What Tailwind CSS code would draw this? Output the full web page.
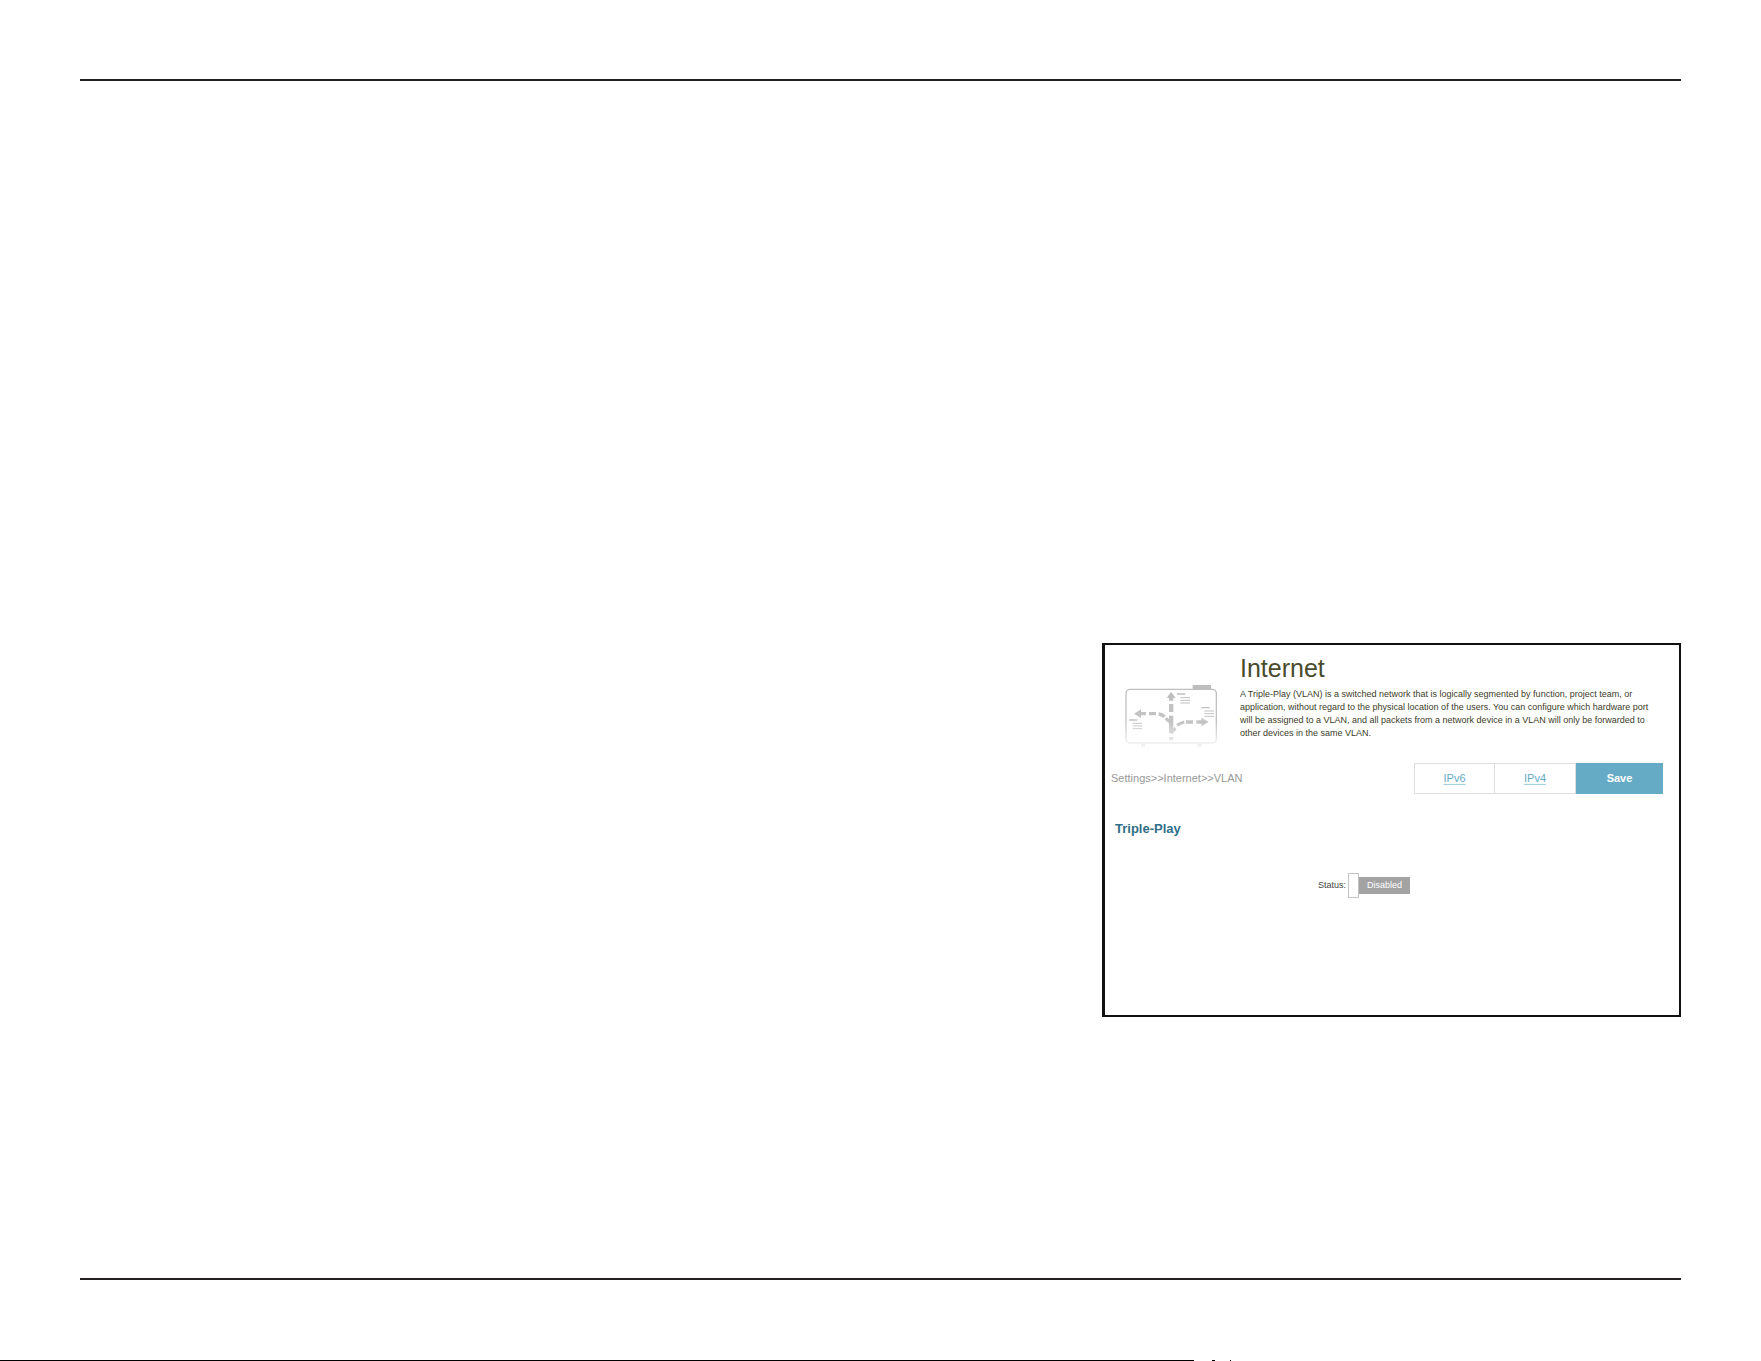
<!DOCTYPE html>
<html lang="en">
  <head>
    <meta charset="UTF-8" />
    <meta name="viewport" content="width=device-width, initial-scale=1.0" />
    <script src="https://cdn.jsdelivr.net/npm/@tailwindcss/browser@4"></script>
    <title>Internet - VLAN</title>
  </head>
  <body class="flex min-h-screen flex-col bg-white font-['Liberation_Sans',Arial,sans-serif]">
    <div class="mx-20 mt-[79px] flex grow flex-col items-end border-y-2 border-[#231f20] pt-[562px] pb-[261px]">
      <main class="w-full max-w-[579px] grow border-2 border-l-3 border-[#111] pr-4">
        <!-- title -->
        <header class="flex">
          <svg class="mt-[30px] ml-[10px] shrink-0" width="110" height="80" viewBox="0 0 330 240" fill="none" aria-hidden="true">
            <defs>
              <linearGradient id="fade" gradientUnits="userSpaceOnUse" x1="0" y1="30" x2="0" y2="218">
                <stop offset="0" stop-color="#bdbdbd" />
                <stop offset="0.6" stop-color="#c4c4c4" />
                <stop offset="1" stop-color="#f6f6f6" />
              </linearGradient>
            </defs>
            <rect x="33" y="43" width="271" height="161" rx="12" stroke="url(#fade)" stroke-width="4" />
            <path fill="url(#fade)" d="M233 30h55v12h-55zM78 206h12v11H78zM247 206h12v11h-12z" />
            <!-- arrows -->
            <path
              fill="url(#fade)"
              d="M168 50l14 19h-7v8h-13v-8h-7zM162 87h13v24h-13zM162 122h13v52h-13zM162 186h13v10h-13zM57 116l21-13v8h15v10H78v8zM102 111h21v10h-21zM281 141l-22-13v8h-15v10h15v8zM213 136h21v10h-21z"
            />
            <path stroke="url(#fade)" stroke-width="10" d="M131 117q10 1 18 8M152 130l14 12M186 151q10-7 22-10M168 176q4-10 14-16" />
            <!-- labels -->
            <path stroke="url(#fade)" stroke-width="4" d="M186 57h25M259 98h25M42 135h25" />
            <path
              stroke="url(#fade)"
              stroke-width="3"
              d="M196 68h29M196 76h29M196 84h29M268 108h29M268 116h29M268 124h29M53 145h28M53 153h28M53 161h28"
            />
          </svg>
          <div class="ml-[15px] max-w-[415px] pt-[9px] text-[#3c3c28]">
            <h1 class="text-[25px] leading-[28px] text-[#484b2c]">Internet</h1>
            <p class="mt-[6px] text-[9px] leading-[13px]">
              A Triple-Play (VLAN) is a switched network that is logically segmented by function, project team, or
              application, without regard to the physical location of the users. You can configure which hardware port
              will be assigned to a VLAN, and all packets from a network device in a VLAN will only be forwarded to
              other devices in the same VLAN.
            </p>
          </div>
        </header>

        <!-- breadcrumb + actions -->
        <div class="mt-2 flex h-[31px] items-center justify-between pl-1.5">
          <span class="text-[11px] text-[#999]">Settings&gt;&gt;Internet&gt;&gt;VLAN</span>
          <nav class="flex h-full text-[11px]">
            <a href="#" class="flex w-[81px] items-center justify-center border border-[#ddd] text-[#66abc6] underline decoration-[#a5d0e0] underline-offset-2">IPv6</a>
            <a href="#" class="flex w-[81px] items-center justify-center border-y border-r border-[#ddd] text-[#66abc6] underline decoration-[#a5d0e0] underline-offset-2">IPv4</a>
            <button type="button" class="w-[87px] bg-[#66abc6] font-bold text-white">Save</button>
          </nav>
        </div>

        <h2 class="mt-[27px] pl-[10px] text-[13px] leading-4 font-bold text-[#2f6f87]">Triple-Play</h2>

        <!-- status switch -->
        <div class="mt-9 flex h-[25px] items-center pl-[213px] text-[9px] leading-[15px]">
          <label for="status" class="text-[#444]">Status:</label>
          <input id="status" type="checkbox" class="ml-0.5 h-full w-[11px] appearance-none border border-[#c4c4c4] bg-white" />
          <span class="flex h-[17px] w-[51px] items-center justify-center bg-[#a3a3a3] text-white">Disabled</span>
        </div>
      </main>
    </div>
    <div class="mt-[80px] flex h-px">
      <div class="w-[1194px] bg-black"></div>
      <div class="ml-[18px] w-[3px] bg-black"></div>
      <div class="ml-[15px] w-px bg-black"></div>
    </div>
  </body>
</html>
